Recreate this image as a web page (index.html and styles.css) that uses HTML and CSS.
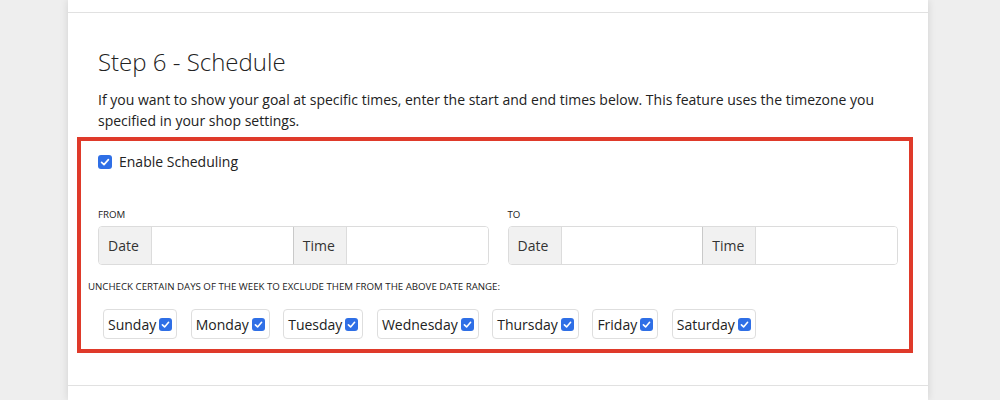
FILE: index.html
```html
<!DOCTYPE html>
<html>
<head>
<meta charset="utf-8">
<link rel="stylesheet" href="styles.css">
</head>
<body>
<div class="card">
  <div class="prev"></div>
  <section class="step">
    <h2 class="title">Step 6 - Schedule</h2>
    <p class="desc">If you want to show your goal at specific times, enter the start and end times below. This feature uses the timezone you specified in your shop settings.</p>
    <div class="highlight">
      <label class="enable">
        <svg class="cb" viewBox="0 0 14 14" width="14" height="14"><rect x="0" y="0" width="14" height="14" rx="3" fill="#2f6fe6"/><path d="M3.6 7.3 L6 9.6 L10.4 4.6" fill="none" stroke="#fff" stroke-width="1.7" stroke-linecap="round" stroke-linejoin="round"/></svg>
        <span>Enable Scheduling</span>
      </label>
      <div class="ranges">
        <div class="range">
          <div class="label">From</div>
          <div class="group">
            <span class="addon">Date</span><span class="field"></span><span class="addon mid">Time</span><span class="field"></span>
          </div>
        </div>
        <div class="range">
          <div class="label">To</div>
          <div class="group">
            <span class="addon">Date</span><span class="field"></span><span class="addon mid">Time</span><span class="field"></span>
          </div>
        </div>
      </div>
      <div class="label days-label">Uncheck certain days of the week to exclude them from the above date range:</div>
      <div class="days">
        <label class="day">Sunday<svg class="cb sm" viewBox="0 0 13 13" width="13" height="13"><rect width="13" height="13" rx="3" fill="#2f6fe6"/><path d="M3.4 6.8 L5.6 8.9 L9.6 4.3" fill="none" stroke="#fff" stroke-width="1.6" stroke-linecap="round" stroke-linejoin="round"/></svg></label>
        <label class="day">Monday<svg class="cb sm" viewBox="0 0 13 13" width="13" height="13"><rect width="13" height="13" rx="3" fill="#2f6fe6"/><path d="M3.4 6.8 L5.6 8.9 L9.6 4.3" fill="none" stroke="#fff" stroke-width="1.6" stroke-linecap="round" stroke-linejoin="round"/></svg></label>
        <label class="day">Tuesday<svg class="cb sm" viewBox="0 0 13 13" width="13" height="13"><rect width="13" height="13" rx="3" fill="#2f6fe6"/><path d="M3.4 6.8 L5.6 8.9 L9.6 4.3" fill="none" stroke="#fff" stroke-width="1.6" stroke-linecap="round" stroke-linejoin="round"/></svg></label>
        <label class="day">Wednesday<svg class="cb sm" viewBox="0 0 13 13" width="13" height="13"><rect width="13" height="13" rx="3" fill="#2f6fe6"/><path d="M3.4 6.8 L5.6 8.9 L9.6 4.3" fill="none" stroke="#fff" stroke-width="1.6" stroke-linecap="round" stroke-linejoin="round"/></svg></label>
        <label class="day">Thursday<svg class="cb sm" viewBox="0 0 13 13" width="13" height="13"><rect width="13" height="13" rx="3" fill="#2f6fe6"/><path d="M3.4 6.8 L5.6 8.9 L9.6 4.3" fill="none" stroke="#fff" stroke-width="1.6" stroke-linecap="round" stroke-linejoin="round"/></svg></label>
        <label class="day">Friday<svg class="cb sm" viewBox="0 0 13 13" width="13" height="13"><rect width="13" height="13" rx="3" fill="#2f6fe6"/><path d="M3.4 6.8 L5.6 8.9 L9.6 4.3" fill="none" stroke="#fff" stroke-width="1.6" stroke-linecap="round" stroke-linejoin="round"/></svg></label>
        <label class="day">Saturday<svg class="cb sm" viewBox="0 0 13 13" width="13" height="13"><rect width="13" height="13" rx="3" fill="#2f6fe6"/><path d="M3.4 6.8 L5.6 8.9 L9.6 4.3" fill="none" stroke="#fff" stroke-width="1.6" stroke-linecap="round" stroke-linejoin="round"/></svg></label>
      </div>
    </div>
  </section>
  <section class="next"></section>
</div>
</body>
</html>
```
FILE: styles.css
```css
html, body {
  margin: 0;
  padding: 0;
  height: 400px;
  overflow: hidden;
  background: #eeeeee;
  font-family: "Open Sans", "Liberation Sans", sans-serif;
  color: #222;
}
.card {
  width: 860px;
  height: 400px;
  margin-left: 68px;
  background: #fff;
  box-shadow: 0 0 8px rgba(0, 0, 0, 0.12);
}
.prev {
  height: 12px;
}
.step {
  border-top: 1px solid #e1e1e1;
  padding: 34px 30px 32px 30px;
}
.title {
  margin: 0;
  font-size: 24px;
  font-weight: 300;
  line-height: 30px;
  color: #222;
}
.desc {
  margin: 12px 0 0 0;
  font-size: 14px;
  line-height: 21px;
}
.highlight {
  margin: 6px -15px 0 -21px;
  border: 4px solid #df3a2a;
  padding: 11px 11px 10px 17px;
}
.enable {
  display: flex;
  align-items: center;
  gap: 7px;
  font-size: 14px;
  line-height: 20px;
}
.cb {
  display: block;
  flex: none;
}
.ranges {
  display: grid;
  grid-template-columns: 1fr 1fr;
  column-gap: 19px;
  margin-top: 36px;
}
.label {
  font-size: 9.7px;
  text-transform: uppercase;
  line-height: 14px;
  color: #222;
}
.group {
  margin-top: 4px;
  display: flex;
  height: 37px;
  border: 1px solid #dcdcdc;
  border-radius: 4px;
  overflow: hidden;
}
.addon {
  display: flex;
  align-items: center;
  padding: 0 9px;
  width: 34px;
  background: #f1f1f1;
  font-size: 14px;
  color: #333;
  border-right: 1px solid #dcdcdc;
}
.addon.mid {
  border-left: 1px solid #c9c9c9;
}
.field {
  flex: 1;
  background: #fff;
}
.days-label {
  margin: 15px 0 0 -10px;
}
.days {
  display: flex;
  gap: 13.5px;
  margin-top: 15px;
  padding-left: 5px;
}
.day {
  display: flex;
  align-items: center;
  gap: 3px;
  height: 28px;
  padding: 0 4px 0 4px;
  border: 1px solid #dedede;
  border-radius: 4px;
  font-size: 14px;
}
.next {
  border-top: 1px solid #e1e1e1;
}
```
